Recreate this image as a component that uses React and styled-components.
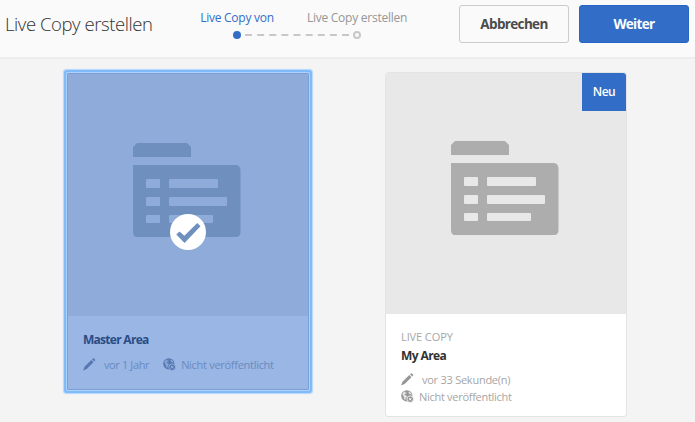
import React from "react";
import styled, { createGlobalStyle, css } from "styled-components";

const GlobalStyle = createGlobalStyle`
  * { box-sizing: border-box; }
  body {
    margin: 0;
    background: #f4f4f4;
    font-family: "Open Sans", "Noto Sans", sans-serif;
    font-stretch: 88%;
    overflow: hidden;
  }
`;

const Page = styled.div`
  width: 695px;
  height: 422px;
  background: #f4f4f4;
`;

const Header = styled.header`
  display: flex;
  height: 59px;
  padding: 0 6px 0 5px;
  background: #fafafa;
  border-bottom: 2px solid #ededed;
`;

const Title = styled.h1`
  width: 172px;
  margin: 12px 0 0;
  font-size: 18.5px;
  font-weight: 300;
  line-height: 24px;
  letter-spacing: -0.42px;
  color: #323232;
  white-space: nowrap;
`;

const Steps = styled.ol`
  display: flex;
  width: 240px;
  margin: 0;
  padding: 0;
  list-style: none;
`;

const Step = styled.li`
  display: flex;
  flex-direction: column;
  align-items: center;
  width: 120px;
  padding-top: 10px;
  font-size: 12px;
  line-height: 16px;
  letter-spacing: -0.25px;
  white-space: nowrap;
  color: ${(p) => (p.$active ? "#326ec8" : "#969696")};
`;

const Track = styled.div`
  display: flex;
  align-items: center;
  width: 100%;
  height: 8px;
  margin-top: 5px;
  padding-left: 56px;
`;

const Dot = styled.span`
  flex: none;
  width: 8px;
  height: 8px;
  border-radius: 50%;
  border: 2px solid ${(p) => (p.$active ? "#326ec8" : "#c8c8c8")};
  background: ${(p) => (p.$active ? "#326ec8" : "#fafafa")};
`;

const Dashes = styled.svg`
  flex: none;
  width: 104px;
  height: 2px;
  margin-left: 4px;
`;

const Actions = styled.div`
  display: flex;
  gap: 10px;
  margin: 5px 0 0 auto;
`;

const Button = styled.button`
  width: 110px;
  height: 38px;
  padding: 0 0 1px;
  border: 1px solid #cbcbcb;
  border-radius: 3px;
  background: #fafafa;
  color: #4b4b4b;
  font: inherit;
  font-stretch: 88%;
  font-size: 13.5px;
  font-weight: 700;
  letter-spacing: -0.65px;
  ${(p) =>
    p.$primary &&
    css`
      border-color: #2765c3;
      background: #326ec8;
      color: #fff;
    `}
`;

const Gallery = styled.main`
  display: flex;
  align-items: flex-start;
  gap: 76px;
  padding: 13px 0 0 67px;
`;

const CardBox = styled.article`
  position: relative;
  width: 242px;
  height: ${(p) => p.$height}px;
  border: 1px solid #e4e4e4;
  border-radius: 3px;
  background: #fff;
  ${(p) =>
    p.$selected &&
    css`
      margin-top: 1px;
      border-color: #7d9fd8;
      border-radius: 1px;
      background: #99b6e4;
      box-shadow: 0 0 0 1px #b0d2fa, 0 0 0 3px #7fbbfb, 0 0 1px 4px #b5d8fa;
    `}
`;

const Preview = styled.div`
  height: ${(p) => (p.$selected ? 242 : 241)}px;
  padding: ${(p) => (p.$selected ? 69 : 68)}px 0 0 65px;
  background: ${(p) => (p.$selected ? "#8eabda" : "#e8e8e8")};
  color: ${(p) => (p.$selected ? "#6f8fbe" : "#adadad")};
  border-radius: 2px 2px 0 0;
`;

const FolderSvg = styled.svg`
  display: block;
`;

const Check = styled.svg`
  position: absolute;
  left: 102px;
  top: 140px;
`;

const Badge = styled.span`
  position: absolute;
  top: 0;
  right: 0;
  width: 44px;
  height: 38px;
  border-radius: 0 3px 0 0;
  background: #326ec8;
  color: #fff;
  font-size: 12px;
  font-weight: 600;
  line-height: 37px;
  letter-spacing: -0.5px;
  text-align: center;
`;

const Info = styled.div`
  padding: ${(p) => (p.$selected ? 15 : 14)}px 15px 0;
  font-size: 11px;
  white-space: nowrap;
  color: ${(p) => (p.$selected ? "#6a8abf" : "#a6a6a6")};
`;

const Kind = styled.div`
  height: 19px;
  line-height: 18px;
  letter-spacing: -0.1px;
`;

const Name = styled.div`
  height: 17px;
  line-height: 17px;
  font-size: 12px;
  font-weight: 700;
  letter-spacing: ${(p) => (p.$selected ? -0.72 : -0.6)}px;
  color: ${(p) => (p.$selected ? "#2b4c84" : "#323232")};
`;

const MetaList = styled.div`
  display: flex;
  flex-direction: ${(p) => (p.$stacked ? "column" : "row")};
  gap: ${(p) => (p.$stacked ? 1 : 14)}px;
  margin-top: ${(p) => (p.$stacked ? 7 : 8)}px;
`;

const Meta = styled.div`
  display: flex;
  align-items: center;
  height: 16px;
  gap: ${(p) => p.$gap}px;
  letter-spacing: ${(p) => p.$spacing}px;
`;

const MetaIcon = styled.svg`
  flex: none;
  color: ${(p) => (p.$selected ? "#5878b2" : "#969696")};
`;

function FolderIcon() {
  return (
    <FolderSvg width="108" height="94" viewBox="0 0 108 94">
      <path fill="currentColor" d="M0 14V4L4 0H54L58 4V14Z" />
      <path
        fill="currentColor"
        fillRule="evenodd"
        d="M0 22H103Q107.500 22.500 107.500 28V89Q107.500 94 103 94H4Q0 94 0 89ZM14 36Q13 36 13 37V44Q13 45 14 45H26Q27 45 27 44V37Q27 36 26 36ZM14 54Q13 54 13 55V62Q13 63 14 63H26Q27 63 27 62V55Q27 54 26 54ZM14 72Q13 72 13 73V79Q13 80 14 80H26Q27 80 27 79V73Q27 72 26 72ZM37 36Q36 36 36 37V44Q36 45 37 45H84Q85 45 85 44V37Q85 36 84 36ZM37 54Q36 54 36 55V62Q36 63 37 63H93Q94 63 94 62V55Q94 54 93 54ZM37 72Q36 72 36 73V79Q36 80 37 80H79Q80 80 80 79V73Q80 72 79 72Z"
      />
    </FolderSvg>
  );
}

function PencilIcon({ selected }) {
  return (
    <MetaIcon $selected={selected} width="13" height="13" viewBox="0 0 13 13" fill="currentColor">
      <path d="M0 12.500 1.500 8.800 8.300 2 10.500 4.200 3.700 11ZM9 1.300 9.900.400Q10.400 0 11 .500L12 1.500Q12.500 2 12.100 2.600L11.200 3.500Z" />
    </MetaIcon>
  );
}

function GlobeIcon({ selected }) {
  const surface = selected ? "#99b6e4" : "#fff";
  return (
    <MetaIcon $selected={selected} width="13" height="13" viewBox="0 0 13 13">
      <circle cx="5.800" cy="5.800" r="5.600" fill="currentColor" />
      <path
        d="M1.200 4 2.800 2.100 4.300 1.400 4 2.500 5.600 2.400 5.200 3.600 3.500 4.200 3.800 5.100 5.500 5.500 5.800 6.800 4.600 8.300 4.200 10.200 3.100 8.700 2.900 6.900ZM7.400 1.400 9.500 2.500 10.500 4.500 8.800 4.200 7.700 3.200Z"
        fill={surface}
        opacity="0.75"
      />
      <circle cx="9.200" cy="9.200" r="3.300" fill="currentColor" stroke={surface} strokeWidth="0.8" />
      <path d="m8.100 8.100 2.200 2.200m0-2.200-2.200 2.200" stroke={surface} strokeWidth="1" />
    </MetaIcon>
  );
}

function SelectedMark() {
  return (
    <Check width="36" height="36" viewBox="0 0 36 36">
      <circle cx="18" cy="18" r="18" fill="#fff" />
      <path d="m6.300 20.500 3.200-3 4.800 4.300L27.300 9l3.200 3.200L14.500 28.900Z" fill="#6f8fbe" />
    </Check>
  );
}

function Card({ selected, kind, name, modified, status, badge, height }) {
  return (
    <CardBox $selected={selected} $height={height}>
      <Preview $selected={selected}>
        <FolderIcon />
      </Preview>
      {selected && <SelectedMark />}
      {badge && <Badge>{badge}</Badge>}
      <Info $selected={selected}>
        {kind && <Kind>{kind}</Kind>}
        <Name $selected={selected}>{name}</Name>
        <MetaList $stacked={!selected}>
          <Meta $gap={8} $spacing={selected ? -0.38 : -0.25}>
            <PencilIcon selected={selected} />
            {modified}
          </Meta>
          <Meta $gap={5} $spacing={-0.29}>
            <GlobeIcon selected={selected} />
            {status}
          </Meta>
        </MetaList>
      </Info>
    </CardBox>
  );
}

export default function App() {
  return (
    <Page>
      <GlobalStyle />
      <Header>
        <Title>Live Copy erstellen</Title>
        <Steps>
          <Step $active>
            Live Copy von
            <Track>
              <Dot $active />
              <Dashes viewBox="0 0 104 2">
                <path d="M0 1H104" stroke="#c8c8c8" strokeWidth="2" strokeDasharray="7 5.130" />
              </Dashes>
            </Track>
          </Step>
          <Step>
            Live Copy erstellen
            <Track>
              <Dot />
            </Track>
          </Step>
        </Steps>
        <Actions>
          <Button>Abbrechen</Button>
          <Button $primary>Weiter</Button>
        </Actions>
      </Header>
      <Gallery>
        <Card selected name="Master Area" modified="vor 1 Jahr" status="Nicht veröffentlicht" height={317} />
        <Card
          kind="LIVE COPY"
          name="My Area"
          modified="vor 33 Sekunde(n)"
          status="Nicht veröffentlicht"
          badge="Neu"
          height={345}
        />
      </Gallery>
    </Page>
  );
}
